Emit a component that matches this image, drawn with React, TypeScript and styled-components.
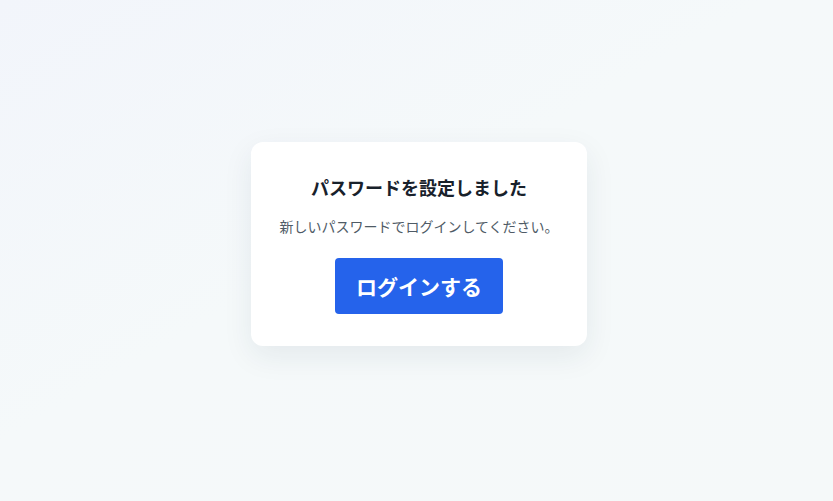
import React from "react";
import styled, { createGlobalStyle } from "styled-components";

const Global = createGlobalStyle`
  html, body { margin: 0; padding: 0; }
  body {
    font-family: "Noto Sans CJK JP", "Noto Sans", sans-serif;
  }
`;

const Page = styled.div`
  min-height: 501px;
  box-sizing: border-box;
  display: flex;
  align-items: center;
  justify-content: center;
  padding: 0 0 13px 5px;
  background: linear-gradient(150deg, #f2f5fb 0%, #f5f9fa 45%, #f5f9f9 100%);
`;

const Card = styled.div`
  width: 336px;
  box-sizing: border-box;
  background: #ffffff;
  border-radius: 12px;
  box-shadow: 0 10px 30px rgba(30, 50, 80, 0.08);
  padding: 32px 16px 32px;
  display: flex;
  flex-direction: column;
  align-items: center;
`;

const Title = styled.h1`
  margin: 0;
  font-size: 18px;
  line-height: 27px;
  font-weight: 700;
  color: #18212b;
`;

const Message = styled.p`
  margin: 14px 0 0;
  font-size: 14px;
  line-height: 22px;
  color: #4f5b66;
`;

const Button = styled.button`
  margin-top: 21px;
  width: 168px;
  height: 56px;
  border: none;
  border-radius: 4px;
  background: #2563eb;
  color: #ffffff;
  font-family: inherit;
  font-size: 21px;
  font-weight: 700;
  cursor: pointer;
`;

export default function App() {
  return (
    <>
      <Global />
      <Page>
        <Card>
          <Title>パスワードを設定しました</Title>
          <Message>新しいパスワードでログインしてください。</Message>
          <Button>ログインする</Button>
        </Card>
      </Page>
    </>
  );
}
